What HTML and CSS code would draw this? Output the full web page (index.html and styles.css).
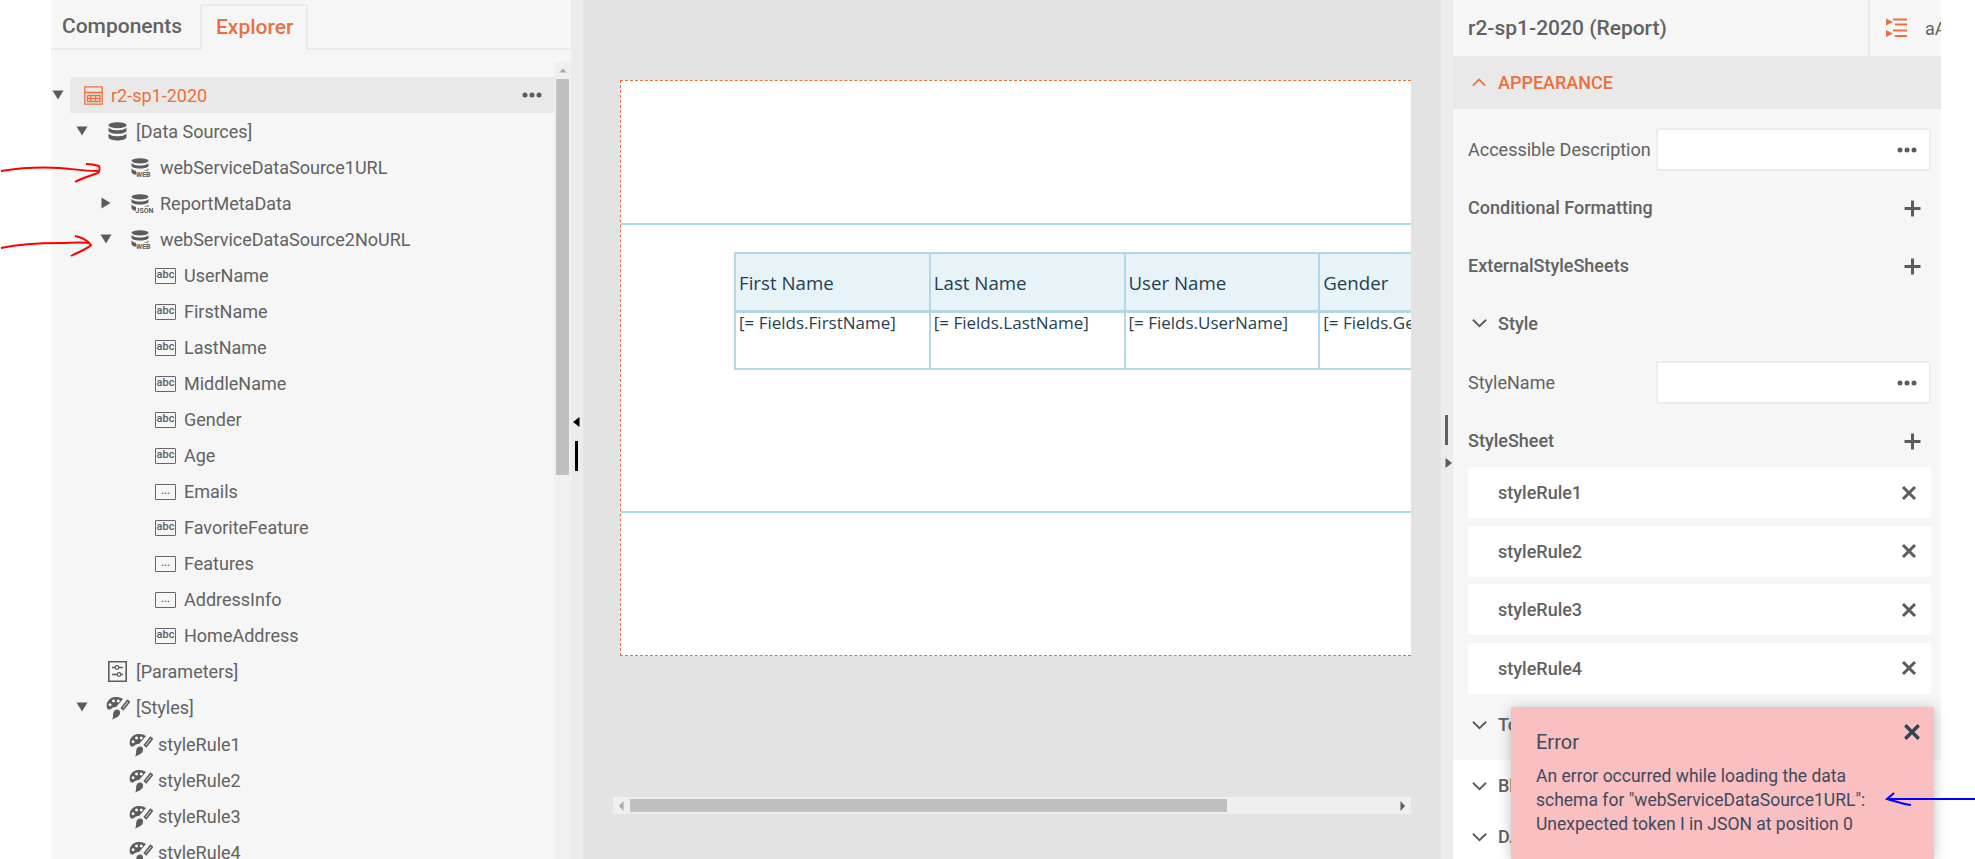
FILE: index.html
```html
<!DOCTYPE html>
<html lang="en">
<head>
<meta charset="utf-8">
<title>Report Designer</title>
<link rel="stylesheet" href="styles.css">
</head>
<body>
<svg class="defs" aria-hidden="true">
  <symbol id="down" viewBox="0 0 12 10"><path d="M0.5 0.5H11.5L6 9.5Z"/></symbol>
  <symbol id="right" viewBox="0 0 10 12"><path d="M0.5 0.5L9.5 6L0.5 11.5Z"/></symbol>
  <symbol id="dots" viewBox="0 0 20 6"><circle cx="3" cy="3" r="2.5"/><circle cx="10" cy="3" r="2.5"/><circle cx="17" cy="3" r="2.5"/></symbol>
  <symbol id="db" viewBox="0 0 19 19"><ellipse cx="9.5" cy="3.2" rx="9" ry="3"/><path d="M0.5 5.6C2 7.8 6 8.3 9.5 8.3S17 7.8 18.5 5.6V9C17.5 11.2 13 11.8 9.5 11.8S1.500 11.200 0.500 9Z"/><path d="M0.5 11.6C2 13.800 6 14.300 9.500 14.300S17 13.800 18.500 11.600V15.500C17.500 17.700 13 18.500 9.500 18.500S1.500 17.700 0.500 15.500Z"/></symbol>
  <symbol id="dbw" viewBox="0 0 21 19"><ellipse cx="9" cy="2.800" rx="8.500" ry="2.600"/><path d="M0.500 5C2 7 6 7.500 9 7.500S16 7 17.500 5V8C16.500 10 12 10.500 9 10.500S1.500 10 0.500 8Z"/><path d="M0.500 10.500C2 12.300 4 12.700 5 12.800V16.800C3 16.500 1 15.800 0.500 14Z"/><path d="M13 12.500C15 12 16.800 11.500 17.500 10.500V12.500H13Z"/></symbol>
  <symbol id="palette" viewBox="0 0 24 24"><path fill-rule="evenodd" d="M1 12C-0.500 7 3 1.500 9 1C12 0.700 15 1.500 17 3L14 6.500L10 11C8 11 6.500 11.500 5.500 12.500C4 14.200 2 14 1 12ZM4 7.200a1.500 1.500 0 1 0 0.100 0ZM7.500 3.500a1.500 1.500 0 1 0 0.100 0ZM12.200 3.500a1.500 1.500 0 1 0 0.100 0Z"/><path d="M11 13.500C13 13.500 14.500 15 14 17.500C13.500 20.500 10 22 6 23.500C7.500 21.500 6.800 19 7.300 17C7.800 15 9 13.500 11 13.500Z"/><path class="open" d="M15.500 12L21.500 4.500L23.300 6L17.200 13.500Z"/></symbol>
  <symbol id="param" viewBox="0 0 19 21"><path class="open" d="M0.800 0.800H18.200V20.200H0.800Z"/><path class="open" d="M4 6.500H15M4 13.500H15"/><circle cx="9" cy="6.500" r="1.800" class="ring"/><circle cx="11" cy="13.500" r="1.800" class="ring"/></symbol>
  <symbol id="plus" viewBox="0 0 17 17"><path d="M7 0.500H10V7H16.500V10H10V16.500H7V10H0.500V7H7Z"/></symbol>
  <symbol id="close" viewBox="0 0 16 16"><path class="heavy" d="M2 2L14 14M14 2L2 14"/></symbol>
  <symbol id="chev" viewBox="0 0 16 10"><path class="open thick" d="M1 1.500L8 8.500L15 1.500"/></symbol>
</svg>

<div class="gutter-left"></div>

<aside class="left">
  <nav class="tabs">
    <span class="tab">Components</span>
    <span class="tab active">Explorer</span>
  </nav>
  <div class="tree-wrap">
    <div class="tree">
      <div class="row l0"><span class="caret"><svg class="tri"><use href="#down"/></svg></span>
        <div class="body selected">
          <svg class="ico-root" viewBox="0 0 19 19"><path d="M0.800 0.800H18.200V18.200H0.800Z M0.800 6.500H18.200 M3.500 9.500H16.500 M3.500 12.500H16.500 M3.500 15.500H16.500 M6.800 9.500V16 M11.500 9.500V16 M3.500 9.500V16 M16 9.500V16"/></svg>
          <span class="lbl">r2-sp1-2020</span>
          <svg class="more"><use href="#dots"/></svg>
        </div>
      </div>
      <div class="row l1"><span class="caret"><svg class="tri"><use href="#down"/></svg></span><div class="body"><svg class="ico-db"><use href="#db"/></svg><span>[Data Sources]</span></div></div>
      <div class="row l2"><span class="caret"></span><div class="body"><svg class="ico-dbw" viewBox="0 0 21 19"><use href="#dbw"/><text x="5" y="18.500" class="tiny">WEB</text></svg><span>webServiceDataSource1URL</span></div></div>
      <div class="row l2"><span class="caret"><svg class="tri-r"><use href="#right"/></svg></span><div class="body"><svg class="ico-dbw" viewBox="0 0 21 19"><use href="#dbw"/><text x="4.500" y="18.500" class="tiny">JSON</text></svg><span>ReportMetaData</span></div></div>
      <div class="row l2"><span class="caret"><svg class="tri"><use href="#down"/></svg></span><div class="body"><svg class="ico-dbw" viewBox="0 0 21 19"><use href="#dbw"/><text x="5" y="18.500" class="tiny">WEB</text></svg><span>webServiceDataSource2NoURL</span></div></div>
      <div class="row l3"><div class="body"><span class="field">abc</span><span>UserName</span></div></div>
      <div class="row l3"><div class="body"><span class="field">abc</span><span>FirstName</span></div></div>
      <div class="row l3"><div class="body"><span class="field">abc</span><span>LastName</span></div></div>
      <div class="row l3"><div class="body"><span class="field">abc</span><span>MiddleName</span></div></div>
      <div class="row l3"><div class="body"><span class="field">abc</span><span>Gender</span></div></div>
      <div class="row l3"><div class="body"><span class="field">abc</span><span>Age</span></div></div>
      <div class="row l3"><div class="body"><span class="field">...</span><span>Emails</span></div></div>
      <div class="row l3"><div class="body"><span class="field">abc</span><span>FavoriteFeature</span></div></div>
      <div class="row l3"><div class="body"><span class="field">...</span><span>Features</span></div></div>
      <div class="row l3"><div class="body"><span class="field">...</span><span>AddressInfo</span></div></div>
      <div class="row l3"><div class="body"><span class="field">abc</span><span>HomeAddress</span></div></div>
      <div class="row l1"><span class="caret"></span><div class="body"><svg class="ico-param"><use href="#param"/></svg><span>[Parameters]</span></div></div>
      <div class="row l1"><span class="caret"><svg class="tri"><use href="#down"/></svg></span><div class="body"><svg class="ico-pal"><use href="#palette"/></svg><span>[Styles]</span></div></div>
      <div class="row l2 rule"><span class="caret"></span><div class="body"><svg class="ico-pal"><use href="#palette"/></svg><span>styleRule1</span></div></div>
      <div class="row l2"><span class="caret"></span><div class="body"><svg class="ico-pal"><use href="#palette"/></svg><span>styleRule2</span></div></div>
      <div class="row l2"><span class="caret"></span><div class="body"><svg class="ico-pal"><use href="#palette"/></svg><span>styleRule3</span></div></div>
      <div class="row l2"><span class="caret"></span><div class="body"><svg class="ico-pal"><use href="#palette"/></svg><span>styleRule4</span></div></div>
    </div>
    <div class="vscroll">
      <svg class="vscroll-up" viewBox="0 0 10 6"><path d="M5 0.500L9.500 5.500H0.500Z"/></svg>
      <div class="vscroll-thumb"></div>
    </div>
  </div>
</aside>

<div class="splitter">
  <svg class="split-tri split-tri-left" viewBox="0 0 7 10"><path d="M6.500 0V10L0 5Z"/></svg>
  <div class="split-bar split-bar-left"></div>
</div>

<main class="center">
  <section class="page">
    <div class="band band-top"></div>
    <div class="band band-mid">
      <table class="grid">
        <thead>
          <tr><th>First Name</th><th>Last Name</th><th>User Name</th><th>Gender</th></tr>
        </thead>
        <tbody>
          <tr><td>[= Fields.FirstName]</td><td>[= Fields.LastName]</td><td>[= Fields.UserName]</td><td>[= Fields.Gender]</td></tr>
        </tbody>
      </table>
    </div>
    <div class="band band-bot"></div>
  </section>
  <div class="hscroll">
    <svg class="hs-arrow" viewBox="0 0 5 10"><path d="M4.500 0V10L0 5Z"/></svg>
    <div class="hs-thumb"></div>
    <svg class="hs-arrow-r" viewBox="0 0 5 10"><path d="M0.500 0V10L5 5Z"/></svg>
  </div>
</main>

<div class="splitter">
  <div class="split-bar split-bar-right"></div>
  <svg class="split-tri split-tri-right" viewBox="0 0 7 10"><path d="M0.500 0V10L7 5Z"/></svg>
</div>

<aside class="right">
  <header class="r-head">
    <h1 class="r-title">r2-sp1-2020 (Report)</h1>
    <div class="r-tools">
      <svg class="r-ico" viewBox="0 0 21 20"><path class="fill-or" d="M0 0.500L7 4L0 7.500Z M0 12L7 15.500L0 19Z"/><path class="line-or" d="M7 1.500H21M9 6.500H21M7 12.500H21M9 18H21"/></svg>
      <span class="r-aa">aA</span>
    </div>
  </header>
  <div class="r-band"><svg class="chev-up"><use href="#chev"/></svg><span>APPEARANCE</span></div>
  <div class="r-body">
    <div class="prop first"><label class="prop-l">Accessible Description</label><div class="input"><svg class="more"><use href="#dots"/></svg></div></div>
    <div class="coll cond"><strong>Conditional Formatting</strong><svg class="plus"><use href="#plus"/></svg></div>
    <div class="coll"><strong>ExternalStyleSheets</strong><svg class="plus"><use href="#plus"/></svg></div>
    <div class="sub"><svg class="chev"><use href="#chev"/></svg><strong>Style</strong></div>
    <div class="prop"><label class="prop-l">StyleName</label><div class="input"><svg class="more"><use href="#dots"/></svg></div></div>
    <div class="coll sheet"><strong>StyleSheet</strong><svg class="plus"><use href="#plus"/></svg></div>
    <div class="rules">
      <div class="rule-card"><span>styleRule1</span><svg class="x"><use href="#close"/></svg></div>
      <div class="rule-card"><span>styleRule2</span><svg class="x"><use href="#close"/></svg></div>
      <div class="rule-card"><span>styleRule3</span><svg class="x"><use href="#close"/></svg></div>
      <div class="rule-card"><span>styleRule4</span><svg class="x"><use href="#close"/></svg></div>
    </div>
    <div class="sub toc"><svg class="chev"><use href="#chev"/></svg><strong>TocText</strong></div>
  </div>
  <div class="r-rest">
    <div class="sub"><svg class="chev"><use href="#chev"/></svg><strong>Blocks</strong></div>
    <div class="sub"><svg class="chev"><use href="#chev"/></svg><strong>DATA</strong></div>
  </div>
</aside>

<div class="gutter-right"></div>

<div class="toast" role="alert">
  <svg class="toast-x"><use href="#close"/></svg>
  <div class="toast-title">Error</div>
  <p class="toast-msg">An error occurred while loading the data schema for "webServiceDataSource1URL": Unexpected token I in JSON at position 0</p>
</div>

<svg class="marks" viewBox="0 0 1975 859" aria-hidden="true">
  <path class="red" d="M1 171C20 168 40 167 60 168C72 169 85 171 98 171M86 164C91 164 96 165 99 166C100 169 100 171 98 173C90 176 82 178 75 182"/>
  <path class="red" d="M1 248C20 244 40 243 60 243C70 243 80 242 90 243M75 236C81 237 87 240 91 245C86 250 78 252 71 256"/>
  <path class="blue" d="M1975 799H1888M1894 793C1892 795 1889 797 1887 799C1894 801 1903 804 1911 805"/>
</svg>
</body>
</html>
```
FILE: styles.css
```css
* { box-sizing: border-box; }
html, body { margin: 0; padding: 0; }
body {
  width: 1975px;
  height: 859px;
  overflow: hidden;
  display: flex;
  position: relative;
  background: #fff;
  font-family: Roboto, "Liberation Sans", sans-serif;
  font-size: 18px;
  color: #626262;
}
svg { display: block; flex: none; fill: #5c5c5c; }
.defs { position: absolute; width: 0; height: 0; }
.open { fill: none; stroke: var(--ink, #5c5c5c); stroke-width: 1.6; }
.thick { stroke-width: 2; }
.ring { fill: #f6f6f6; stroke: #5c5c5c; stroke-width: 1.2; }
.heavy { fill: none; stroke: var(--ink, #5c5c5c); stroke-width: 3; }

.gutter-left { width: 51px; flex: none; }
.gutter-right { width: 34px; flex: none; }

/* left panel */
.left { width: 520px; flex: none; background: #f6f6f6; display: flex; flex-direction: column; height: 859px; overflow: hidden; }
.tabs { height: 50px; flex: none; display: flex; border-bottom: 2px solid #ececec; padding-top: 4px; }
.tab { font-size: 21px; font-weight: 500; color: #626262; padding: 0 0 0 11px; width: 149px; line-height: 44px; height: 46px; }
.tab.active { width: 108px; padding-left: 14px; color: #ea703f; background: #f6f6f6; border: 2px solid #ececec; border-bottom: 0; border-radius: 2px 2px 0 0; line-height: 42px; }
.tree-wrap { flex: 1; display: flex; min-height: 0; }
.tree { width: 503px; flex: none; padding-top: 27px; }
.row { height: 36px; display: flex; align-items: center; }
.rule { margin-top: 1px; }
.body { flex: 1; height: 36px; padding-top: 1px; display: flex; align-items: center; gap: 8px; min-width: 0; white-space: nowrap; }
.caret { flex: none; display: flex; }
.l0 { padding-left: 1px; }
.l0 .caret { width: 18px; }
.l1 { padding-left: 25px; }
.l1 .caret { width: 32px; }
.l1 .body { gap: 9px; }
.l2 { padding-left: 49px; }
.l2 .caret { width: 31px; }
.l3 { padding-left: 104px; }
.tri { width: 12px; height: 10px; }
.tri-r { width: 10px; height: 12px; margin-left: 1px; }
.selected { background: #e9e9e9; padding: 0 12px 0 14px; color: #ea703f; }
.selected .lbl { flex: 1; }
.more { width: 20px; height: 6px; }
.ico-root { width: 19px; height: 19px; fill: none; stroke: #ea703f; stroke-width: 1.3; }
.ico-db { width: 19px; height: 19px; }
.ico-dbw { width: 21px; height: 19px; overflow: visible; }
.tiny { font: 700 7px Roboto, sans-serif; fill: #5c5c5c; }
.ico-param { width: 19px; height: 21px; }
.ico-pal { width: 24px; height: 24px; margin-left: -2px; margin-right: -3px; }
.field { width: 21px; height: 16px; flex: none; border: 1.5px solid #666; border-radius: 1px; font-size: 11px; line-height: 12px; text-align: center; font-weight: 500; color: #5c5c5c; }

.vscroll { width: 17px; flex: none; margin-top: 12px; background: #f0f0f0; padding: 6px 2px 0; }
.vscroll-up { width: 8px; height: 5px; margin: 0 auto 6px; fill: #a8a8a8; }
.vscroll-thumb { height: 396px; background: #c0c0c0; }

/* splitters */
.splitter { width: 12px; flex: none; background: #ececec; position: relative; height: 859px; }
.split-tri { position: absolute; width: 7px; height: 10px; fill: #000; }
.split-tri-left { left: 2px; top: 417px; }
.split-tri-right { left: 4px; top: 458px; fill: #5c5c5c; }
.split-bar { position: absolute; width: 3px; height: 30px; }
.split-bar-left { left: 4px; top: 441px; background: #000; }
.split-bar-right { left: 4px; top: 415px; background: #5f5f5f; }

/* center */
.center { width: 858px; flex: none; height: 859px; background: #e3e3e3; padding-top: 80px; overflow: hidden; }
.page { width: 791px; height: 576px; margin-left: 37px; background: #fff; border-top: 1px dashed #ea703f; border-left: 1px dashed #ea703f; border-bottom: 1px dashed #ea703f; overflow: hidden; }
.band { border-bottom: 2px solid #add8e6; }
.band-top { height: 144px; }
.band-mid { height: 288px; padding: 27px 0 0 113px; }
.band-bot { border-bottom: 0; }
.grid { width: 779px; table-layout: fixed; border-collapse: collapse; font-family: "Open Sans", "Noto Sans", sans-serif; color: #1f3f52; }
.grid th, .grid td { border: 2px solid #b2d8e6; width: 194.750px; padding: 0 3px; text-align: left; font-weight: 400; vertical-align: top; white-space: nowrap; overflow: hidden; }
.grid th { height: 58px; background: #e8f3f8; font-size: 18.700px; vertical-align: middle; padding-top: 2px; border-bottom-width: 3px; }
.grid td { height: 58px; font-size: 17px; line-height: 20px; }
.hscroll { width: 798px; height: 17px; margin: 141px 0 0 30px; background: #efefef; display: flex; align-items: center; padding: 0 6px; }
.hs-arrow { width: 5px; height: 10px; fill: #a8a8a8; margin-right: 6px; }
.hs-thumb { width: 597px; height: 13px; background: #c0c0c0; }
.hs-arrow-r { width: 5px; height: 10px; fill: #5c5c5c; margin-left: auto; }

/* right panel */
.right { width: 488px; flex: none; height: 859px; background: #fff; overflow: hidden; }
.r-head { height: 56px; background: #f6f6f6; display: flex; align-items: center; padding-left: 15px; }
.r-title { flex: 1; margin: 0; font-size: 21px; font-weight: 500; color: #626262; line-height: 56px; }
.r-tools { width: 73px; height: 56px; flex: none; display: flex; align-items: center; border-left: 2px solid #ebebeb; padding-left: 16px; gap: 18px; overflow: hidden; }
.r-ico { width: 21px; height: 20px; }
.fill-or { fill: #ea703f; }
.line-or { fill: none; stroke: #ea703f; stroke-width: 2; }
.r-aa { white-space: nowrap; }
.r-band { height: 53px; background: #e9e9e9; display: flex; align-items: center; padding-left: 19px; gap: 12px; color: #ea703f; font-weight: 500; }
.chev-up { width: 14px; height: 9px; transform: rotate(180deg); --ink: #ea703f; }
.r-body { height: 651px; background: #f6f6f6; padding: 0 10px 0 15px; display: flow-root; }
.prop { display: flex; align-items: center; height: 43px; margin-top: 9px; }
.prop.first { margin-top: 19px; }
.prop-l { flex: 1; }
.input { width: 275px; height: 43px; flex: none; background: #fff; border: 2px solid #ececec; border-radius: 2px; display: flex; align-items: center; justify-content: flex-end; padding-right: 12px; }
.coll { height: 58px; display: flex; align-items: center; justify-content: space-between; padding-right: 10px; }
.coll.cond { margin-top: 7px; }
.coll strong, .sub strong { font-weight: 500; white-space: nowrap; }
.coll .plus { width: 17px; height: 17px; margin-top: 3px; }
.coll.sheet { height: 42px; margin-top: 15px; margin-bottom: 6px; }
.sub { height: 58px; display: flex; align-items: center; gap: 11px; padding-left: 4px; }
.chev { width: 15px; height: 10px; }
.rules { display: flex; flex-direction: column; gap: 7.670px; }
.rule-card { height: 51px; background: #fff; border-radius: 2px; display: flex; align-items: center; justify-content: space-between; padding: 0 14px 0 30px; font-weight: 500; }
.x { width: 16px; height: 16px; }
.toc { margin-top: 2px; }
.r-rest { padding: 0 0 0 15px; }
.r-rest .sub { height: 51px; }

/* toast */
.toast { position: absolute; left: 1511px; top: 707px; width: 423px; height: 152px; background: #f9bfc1; box-shadow: 0 2px 12px rgba(0,0,0,.25); padding: 22px 25px 0; color: #3f4a5c; --ink: #37424f; }
.toast-title { font-size: 20px; line-height: 26px; }
.toast-msg { margin: 9px 0 0; line-height: 24px; font-size: 17.500px; }
.toast-x { position: absolute; left: 392px; top: 16px; width: 18px; height: 18px; }

.marks { position: absolute; left: 0; top: 0; width: 1975px; height: 859px; fill: none; pointer-events: none; }
.red { fill: none; stroke: #f00; stroke-width: 2; }
.blue { fill: none; stroke: #00f; stroke-width: 2; }
```
